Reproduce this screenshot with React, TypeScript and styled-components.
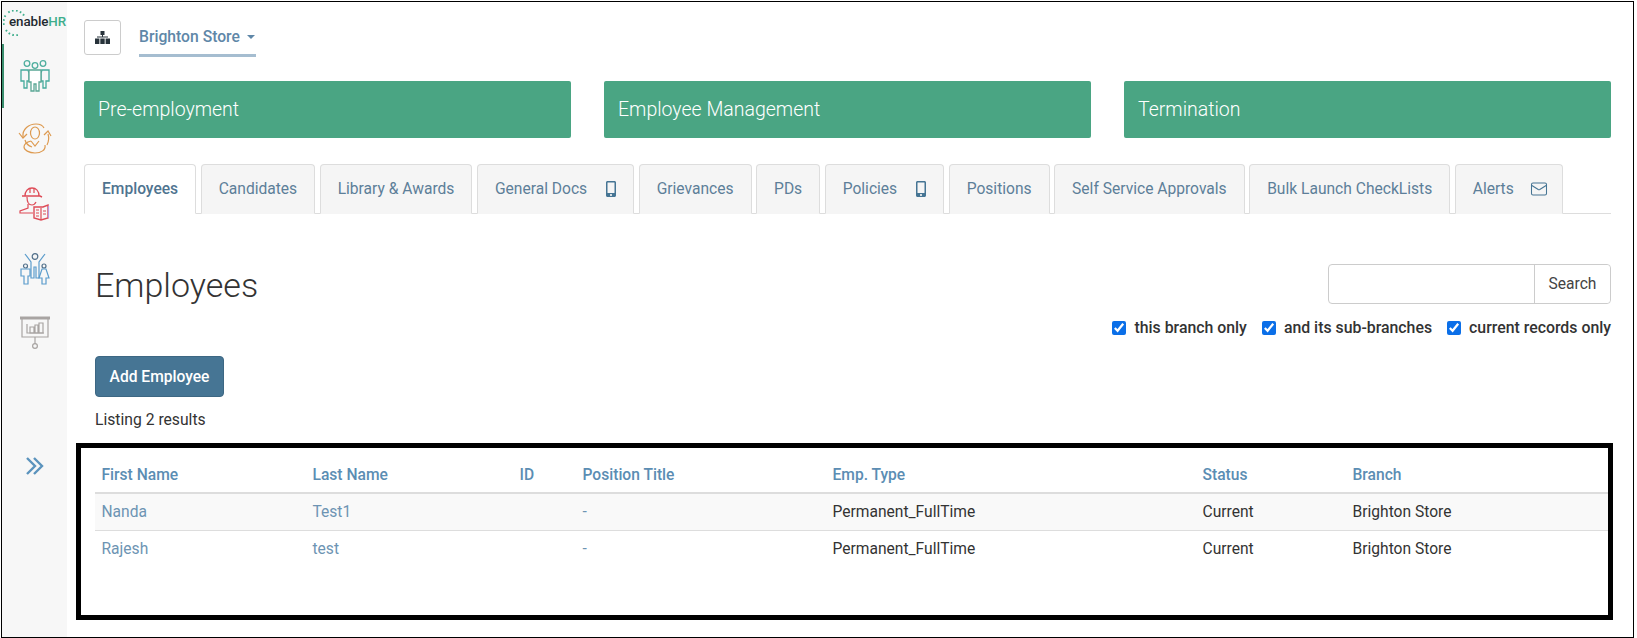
import React from 'react';
import styled, { createGlobalStyle } from 'styled-components';
import { Mail } from 'lucide-react';
import { FaMobileAlt } from 'react-icons/fa';

const GlobalStyle = createGlobalStyle`
  html, body {
    margin: 0;
    padding: 0;
    background: #fff;
  }
  body {
    font-family: Roboto, "Liberation Sans", sans-serif;
    color: #333;
  }
`;

const Page = styled.div`
  box-sizing: border-box;
  width: 1633px;
  height: 637px;
  margin-top: 1px;
  margin-left: 1px;
  border: 1px solid #000;
  display: flex;
  overflow: hidden;
`;

const Sidebar = styled.aside`
  width: 65px;
  flex-shrink: 0;
  background: #f7f7f7;
  display: flex;
  flex-direction: column;
  align-items: center;
`;

const Logo = styled.div`
  position: relative;
  height: 42px;
  width: 65px;
  font-size: 13.4px;
  font-weight: 500;
  line-height: 40px;
  padding-left: 7px;
  box-sizing: border-box;
  color: #1f2a30;
  letter-spacing: -0.1px;
  white-space: nowrap;

  svg {
    position: absolute;
    left: 1px;
    top: 8px;
  }

  span {
    color: #3fae8c;
  }
`;

const NavItem = styled.div<{ $active?: boolean; $height: number }>`
  width: 100%;
  height: ${(p) => p.$height}px;
  box-sizing: border-box;
  display: flex;
  align-items: center;
  justify-content: center;
  border-left: 2px solid ${(p) => (p.$active ? '#3a8f6f' : 'transparent')};
  padding-right: 2px;
`;

const Expand = styled.div`
  margin-top: 91px;
  display: flex;
`;

const Main = styled.main`
  flex: 1;
  padding: 18px 22px 0 17px;
  min-width: 0;
`;

const TopBar = styled.div`
  display: flex;
  align-items: flex-start;
  gap: 18px;
`;

const TreeButton = styled.button`
  width: 37px;
  height: 35px;
  background: #fff;
  border: 1px solid #ccc;
  border-radius: 3px;
  padding: 0;
  display: flex;
  align-items: center;
  justify-content: center;
`;

const BranchPicker = styled.div`
  height: 37px;
  width: 117px;
  box-sizing: border-box;
  border-bottom: 3px solid #a5bdd0;
  font-size: 15.7px;
  font-weight: 500;
  color: #5f87a8;
  line-height: 38px;
  display: flex;
  align-items: center;
  gap: 7px;
  white-space: nowrap;

  &::after {
    content: '';
    border-left: 4px solid transparent;
    border-right: 4px solid transparent;
    border-top: 4px solid #5f87a8;
  }
`;

const Banners = styled.div`
  display: grid;
  grid-template-columns: repeat(3, 487px);
  justify-content: space-between;
  margin-top: 24px;
`;

const Banner = styled.div`
  height: 57px;
  background: #4aa583;
  border-radius: 2px;
  color: #fff;
  font-size: 19.5px;
  font-weight: 300;
  line-height: 58px;
  padding-left: 14px;
`;

const Tabs = styled.div`
  display: flex;
  margin-top: 26px;
  height: 50px;
  box-sizing: border-box;
  border-bottom: 1px solid #ddd;
  gap: 4.5px;
`;

const Tab = styled.div<{ $active?: boolean }>`
  box-sizing: border-box;
  height: 50px;
  padding: 0 17px 1px;
  display: flex;
  align-items: center;
  gap: 16px;
  font-size: 15.6px;
  font-weight: ${(p) => (p.$active ? 500 : 400)};
  color: ${(p) => (p.$active ? '#4f7490' : '#5d7f99')};
  background: ${(p) => (p.$active ? '#fff' : '#f5f5f5')};
  border: 1px solid #ddd;
  border-bottom-color: ${(p) => (p.$active ? '#fff' : '#f5f5f5')};
  border-radius: 4px 4px 0 0;
  white-space: nowrap;

  svg {
    color: #467594;
    margin-right: -3px;
  }
`;

const Section = styled.section`
  padding-left: 11px;
`;

const ListHeader = styled.div`
  display: flex;
  justify-content: space-between;
  align-items: flex-start;
  margin-top: 50px;
`;

const Title = styled.h1`
  margin: 0;
  font-size: 34px;
  font-weight: 300;
  line-height: 42px;
  color: #333;
`;

const Filters = styled.div`
  display: flex;
  flex-direction: column;
  align-items: flex-end;
`;

const SearchGroup = styled.div`
  display: flex;
  width: 283px;
  height: 40px;
  box-sizing: border-box;
  border: 1px solid #ccc;
  border-radius: 4px;
`;

const SearchInput = styled.input`
  flex: 1;
  min-width: 0;
  border: 0;
  background: transparent;
  outline: none;
`;

const SearchButton = styled.button`
  width: 76px;
  border: 0;
  border-left: 1px solid #ccc;
  background: #fff;
  padding: 0;
  border-radius: 0 4px 4px 0;
  font: 400 15.6px Roboto, sans-serif;
  color: #444;
`;

const CheckRow = styled.div`
  display: flex;
  gap: 15px;
  margin-top: 14px;
`;

const CheckLabel = styled.label`
  display: flex;
  align-items: center;
  gap: 8px;
  font-size: 15.85px;
  font-weight: 500;
  color: #333;
  line-height: 20px;
  white-space: nowrap;

  input {
    margin: 0;
    width: 14px;
    height: 14px;
    accent-color: #0b6fe8;
  }
`;

const AddButton = styled.button`
  display: block;
  width: 129px;
  height: 41px;
  margin-top: 18px;
  background: #467594;
  border: 1px solid #3d6783;
  border-radius: 4px;
  color: #fff;
  font: 500 15.6px Roboto, sans-serif;
  padding: 0;
`;

const Listing = styled.div`
  margin-top: 13px;
  font-size: 15.7px;
  line-height: 20px;
  color: #333;
`;

const Highlight = styled.div`
  margin: 13px 0 0 -19px;
  width: 1537px;
  height: 177px;
  box-sizing: border-box;
  border: 5px solid #000;
  padding-left: 14px;
`;

const Table = styled.table`
  width: 1513px;
  border-collapse: collapse;
  table-layout: fixed;
  font-size: 15.6px;
`;

const Col = styled.col<{ $width: number }>`
  width: ${(p) => p.$width}px;
`;

const Th = styled.th`
  height: 45px;
  padding: 10px 0 0 6.5px;
  box-sizing: border-box;
  text-align: left;
  font-weight: 500;
  color: #5b8db3;
  border-bottom: 2px solid #ddd;
`;

const Tr = styled.tr<{ $striped?: boolean }>`
  background: ${(p) => (p.$striped ? '#f9f9f9' : '#fff')};
  border-bottom: ${(p) => (p.$striped ? '1px solid #ddd' : '0')};
`;

const Td = styled.td<{ $link?: boolean }>`
  height: 37px;
  padding: 1px 0 0 6.5px;
  box-sizing: border-box;
  color: ${(p) => (p.$link ? '#6d94b3' : '#333')};
`;

const tabs = [
  { label: 'Employees', active: true },
  { label: 'Candidates' },
  { label: 'Library & Awards' },
  { label: 'General Docs', icon: 'phone' },
  { label: 'Grievances' },
  { label: 'PDs' },
  { label: 'Policies', icon: 'phone' },
  { label: 'Positions' },
  { label: 'Self Service Approvals' },
  { label: 'Bulk Launch CheckLists' },
  { label: 'Alerts', icon: 'mail' },
];

const columns = [
  { label: 'First Name', width: 211 },
  { label: 'Last Name', width: 207 },
  { label: 'ID', width: 63 },
  { label: 'Position Title', width: 250 },
  { label: 'Emp. Type', width: 370 },
  { label: 'Status', width: 150 },
  { label: 'Branch', width: 262 },
];

const employees = [
  { first: 'Nanda', last: 'Test1' },
  { first: 'Rajesh', last: 'test' },
];

const LogoRing = () => (
  <svg width="22" height="26" viewBox="0 0 22 26" fill="none">
    <path
      d="M21 5.5A11.5 12 0 0 0 4 3.5M2.5 5.5A11.5 12 0 0 0 1.5 17M3 20A11.5 12 0 0 0 15 25"
      stroke="#3fae8c"
      strokeWidth="2"
      strokeDasharray="1.6 2.4"
    />
  </svg>
);

const TreeIcon = () => (
  <svg width="15" height="13" viewBox="0 0 15 13" fill="#27323a">
    <rect x="5.5" y="0" width="4" height="4" />
    <rect x="7" y="4" width="1" height="2" />
    <rect x="2" y="5.5" width="11" height="1" />
    <rect x="0" y="7.5" width="4.4" height="5.5" />
    <rect x="5.3" y="7.5" width="4.4" height="5.5" />
    <rect x="10.6" y="7.5" width="4.4" height="5.5" />
  </svg>
);

const ExpandIcon = () => (
  <svg width="18" height="18" viewBox="0 0 18 18" fill="none" stroke="#5b93bd" strokeWidth="2.4">
    <path d="M1 1l8 8-8 8M8 1l8 8-8 8" />
  </svg>
);

const PeopleIcon = () => (
  <svg width="30" height="32" viewBox="0 0 30 32" fill="none" strokeWidth="1.3">
    <g stroke="#4fae9e">
      <circle cx="7" cy="3.5" r="2.8" />
      <circle cx="15" cy="5.5" r="2.8" />
      <circle cx="23" cy="3.5" r="2.8" />
    </g>
    <path d="M1 10h7l1 3v8H7v7H4v-7H1zM29 10h-7l-1 3v8h2v7h3v-7h3z" stroke="#45ab9d" />
    <path d="M9 10h12v12h-2v9h-3v-7h-2v7h-3v-9H9z" stroke="#5aa795" fill="#fff" />
  </svg>
);

const RotationIcon = () => (
  <svg width="36" height="32" viewBox="0 0 36 32" fill="none" stroke="#dd9a50" strokeWidth="1.2">
    <path d="M6 14C5 6 12 1 19 1c4 0 7 2 8 4" />
    <path d="M2 10l4 5 4-4" />
    <path d="M8 17c1 4 4 6 7 7" />
    <ellipse cx="18" cy="10" rx="4.5" ry="6" />
    <path d="M14 18c-4 1-7 3-7 6 0 3 5 6 11 6s11-3 10-8" />
    <path d="M22 18l-4 5-4-5M30 22c2-4 2-8 1-11M27 12l4-4 3 5" />
  </svg>
);

const SafetyIcon = () => (
  <svg width="32" height="34" viewBox="0 0 32 34" fill="none" stroke="#de4b57" strokeWidth="1.2">
    <path d="M6 9c0-5 3-8 7-8s7 3 7 8M3 9h18l2 1" strokeWidth="1.4" />
    <path d="M11 1v5M15 1v5" />
    <path d="M8 10c0 5 2 8 5 8 2 0 3-1 4-3M9 17v4l-8 3v2h13" />
    <path d="M15 20h9l5-2v13l-7 2-7-2z" fill="#f7f7f7" strokeWidth="1.4" />
    <path d="M22 21v12M17 23h3M17 26h3M17 29h3M24 24h3M24 27h3" />
    <path d="M29.5 19v12" stroke="#b89adf" />
  </svg>
);

const TeamIcon = () => (
  <svg width="30" height="32" viewBox="0 0 30 32" fill="none" stroke="#5b9ccc" strokeWidth="1.2">
    <circle cx="15" cy="3.5" r="2.8" stroke="#52708a" />
    <path d="M5 1l6 8v16h3V14h2v11h3V9l6-8" />
    <circle cx="5.5" cy="13" r="2" stroke="#52708a" />
    <path d="M1 16h9v7H8v8H4v-8H1z" />
    <circle cx="24" cy="13" r="2" stroke="#52708a" />
    <path d="M22 16h4l3 9h-3v6h-4v-6h-3z" />
  </svg>
);

const BoardIcon = () => (
  <svg width="32" height="34" viewBox="0 0 32 34" fill="none" stroke="#a8a4a2" strokeWidth="1.2">
    <path d="M1 2h30" strokeWidth="3" />
    <path d="M3 3v18h26V3M16 21v7" />
    <circle cx="16" cy="30" r="2.4" />
    <path d="M8 8v9h17" />
    <path d="M11 11h4v6h-4zM16 9h3v8h-3zM20 7h4v10h-4z" />
  </svg>
);

const tabIcon = (name?: string) => {
  if (name === 'phone') return <FaMobileAlt size={16} />;
  if (name === 'mail') return <Mail size={18} strokeWidth={1.4} />;
  return null;
};

const App: React.FC = () => {
  return (
    <>
      <GlobalStyle />
      <Page>
        <Sidebar>
          <Logo>
            <LogoRing />
            enable<span>HR</span>
          </Logo>
          <NavItem $active $height={64}>
            <PeopleIcon />
          </NavItem>
          <NavItem $height={62}>
            <RotationIcon />
          </NavItem>
          <NavItem $height={68}>
            <SafetyIcon />
          </NavItem>
          <NavItem $height={62}>
            <TeamIcon />
          </NavItem>
          <NavItem $height={66}>
            <BoardIcon />
          </NavItem>
          <Expand>
            <ExpandIcon />
          </Expand>
        </Sidebar>
        <Main>
          <TopBar>
            <TreeButton aria-label="Branches">
              <TreeIcon />
            </TreeButton>
            <BranchPicker>Brighton Store</BranchPicker>
          </TopBar>
          <Banners>
            <Banner>Pre-employment</Banner>
            <Banner>Employee Management</Banner>
            <Banner>Termination</Banner>
          </Banners>
          <Tabs>
            {tabs.map((tab) => (
              <Tab key={tab.label} $active={tab.active}>
                {tab.label}
                {tabIcon(tab.icon)}
              </Tab>
            ))}
          </Tabs>
          <Section>
            <ListHeader>
              <Title>Employees</Title>
              <Filters>
                <SearchGroup>
                  <SearchInput />
                  <SearchButton>Search</SearchButton>
                </SearchGroup>
                <CheckRow>
                  <CheckLabel>
                    <input type="checkbox" defaultChecked />
                    this branch only
                  </CheckLabel>
                  <CheckLabel>
                    <input type="checkbox" defaultChecked />
                    and its sub-branches
                  </CheckLabel>
                  <CheckLabel>
                    <input type="checkbox" defaultChecked />
                    current records only
                  </CheckLabel>
                </CheckRow>
              </Filters>
            </ListHeader>
            <AddButton>Add Employee</AddButton>
            <Listing>Listing 2 results</Listing>
            <Highlight>
              <Table>
                <colgroup>
                  {columns.map((col) => (
                    <Col key={col.label} $width={col.width} />
                  ))}
                </colgroup>
                <thead>
                  <tr>
                    {columns.map((col) => (
                      <Th key={col.label}>{col.label}</Th>
                    ))}
                  </tr>
                </thead>
                <tbody>
                  {employees.map((emp, i) => (
                    <Tr key={emp.first} $striped={i === 0}>
                      <Td $link>{emp.first}</Td>
                      <Td $link>{emp.last}</Td>
                      <Td />
                      <Td $link>-</Td>
                      <Td>Permanent_FullTime</Td>
                      <Td>Current</Td>
                      <Td>Brighton Store</Td>
                    </Tr>
                  ))}
                </tbody>
              </Table>
            </Highlight>
          </Section>
        </Main>
      </Page>
    </>
  );
};

export default App;
